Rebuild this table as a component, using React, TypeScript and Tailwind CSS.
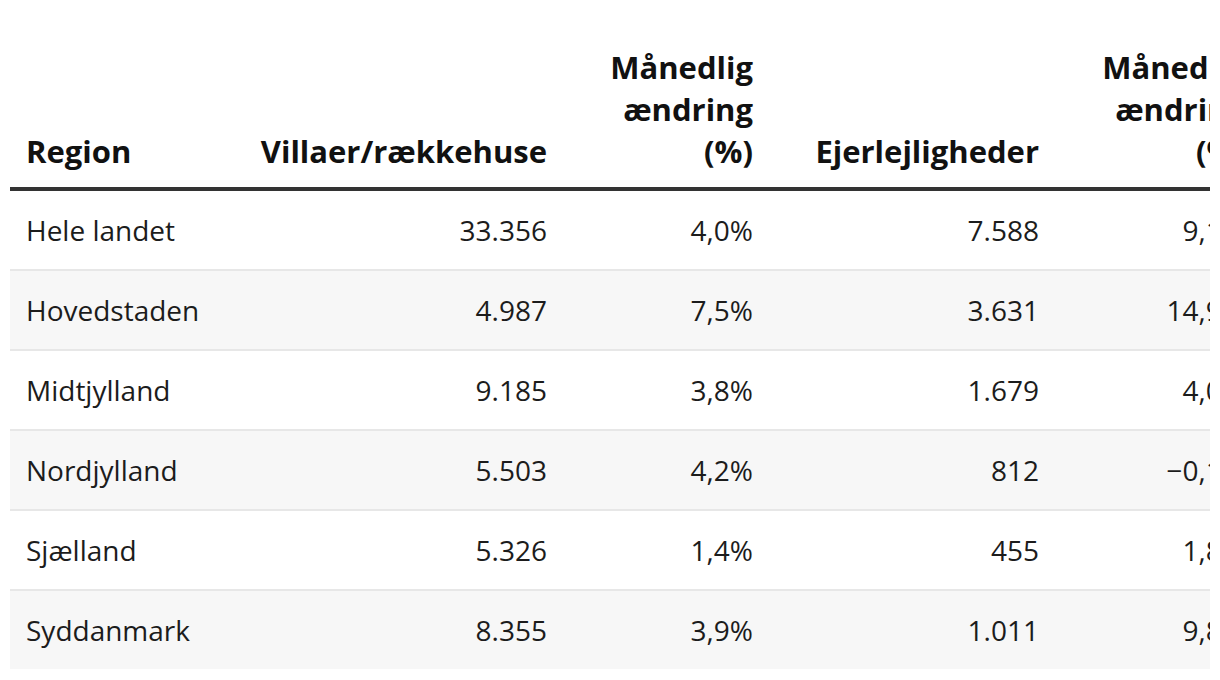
import React from "react";

type Row = {
  region: string;
  villaer: string;
  villaerPct: string;
  ejer: string;
  ejerPct: string;
};

const rows: Row[] = [
  { region: "Hele landet", villaer: "33.356", villaerPct: "4,0%", ejer: "7.588", ejerPct: "9,1%" },
  { region: "Hovedstaden", villaer: "4.987", villaerPct: "7,5%", ejer: "3.631", ejerPct: "14,9%" },
  { region: "Midtjylland", villaer: "9.185", villaerPct: "3,8%", ejer: "1.679", ejerPct: "4,0%" },
  { region: "Nordjylland", villaer: "5.503", villaerPct: "4,2%", ejer: "812", ejerPct: "−0,1%" },
  { region: "Sjælland", villaer: "5.326", villaerPct: "1,4%", ejer: "455", ejerPct: "1,8%" },
  { region: "Syddanmark", villaer: "8.355", villaerPct: "3,9%", ejer: "1.011", ejerPct: "9,8%" },
];

export default function App() {
  return (
    <div className="min-h-[680px] bg-white px-[10px] pt-[30px] font-['Open_Sans',sans-serif] text-[28px] leading-[42px]">
      <div className="w-[1200px] overflow-hidden">
        <table className="w-[1251px] table-fixed border-collapse">
          <colgroup>
            <col className="w-[220px]" />
            <col className="w-[333px]" />
            <col className="w-[206px]" />
            <col className="w-[286px]" />
            <col className="w-[206px]" />
          </colgroup>
          <thead>
            {/* header is a touch larger than the body text */}
            <tr className="border-b-4 border-[#333333] text-[31px] leading-[42px] text-[#111111]">
              <th className="px-4 pb-[15px] pt-4 text-left align-bottom font-bold">Region</th>
              <th className="px-4 pb-[15px] pt-4 text-right align-bottom font-bold whitespace-nowrap">Villaer/rækkehuse</th>
              <th className="px-4 pb-[15px] pt-4 text-right align-bottom font-bold whitespace-nowrap">
                Månedlig
                <br />
                ændring
                <br />
                (%)
              </th>
              <th className="px-4 pb-[15px] pt-4 text-right align-bottom font-bold whitespace-nowrap">Ejerlejligheder</th>
              <th className="px-4 pb-[15px] pt-4 text-right align-bottom font-bold whitespace-nowrap">
                Månedlig
                <br />
                ændring
                <br />
                (%)
              </th>
            </tr>
          </thead>
          <tbody className="text-[#1c1c1c]">
            {rows.map((r, i) => (
              <tr
                key={r.region}
                className={
                  (i % 2 === 1 ? "bg-[#f7f7f7] " : "bg-white ") +
                  (i < rows.length - 1 ? "border-b-2 border-[#e7e7e7]" : "")
                }
              >
                <td className="px-4 py-[18px] text-left">{r.region}</td>
                <td className="px-4 py-[18px] text-right">{r.villaer}</td>
                <td className="px-4 py-[18px] text-right">{r.villaerPct}</td>
                <td className="px-4 py-[18px] text-right">{r.ejer}</td>
                <td className="px-4 py-[18px] text-right whitespace-nowrap">{r.ejerPct}</td>
              </tr>
            ))}
          </tbody>
        </table>
      </div>
    </div>
  );
}
